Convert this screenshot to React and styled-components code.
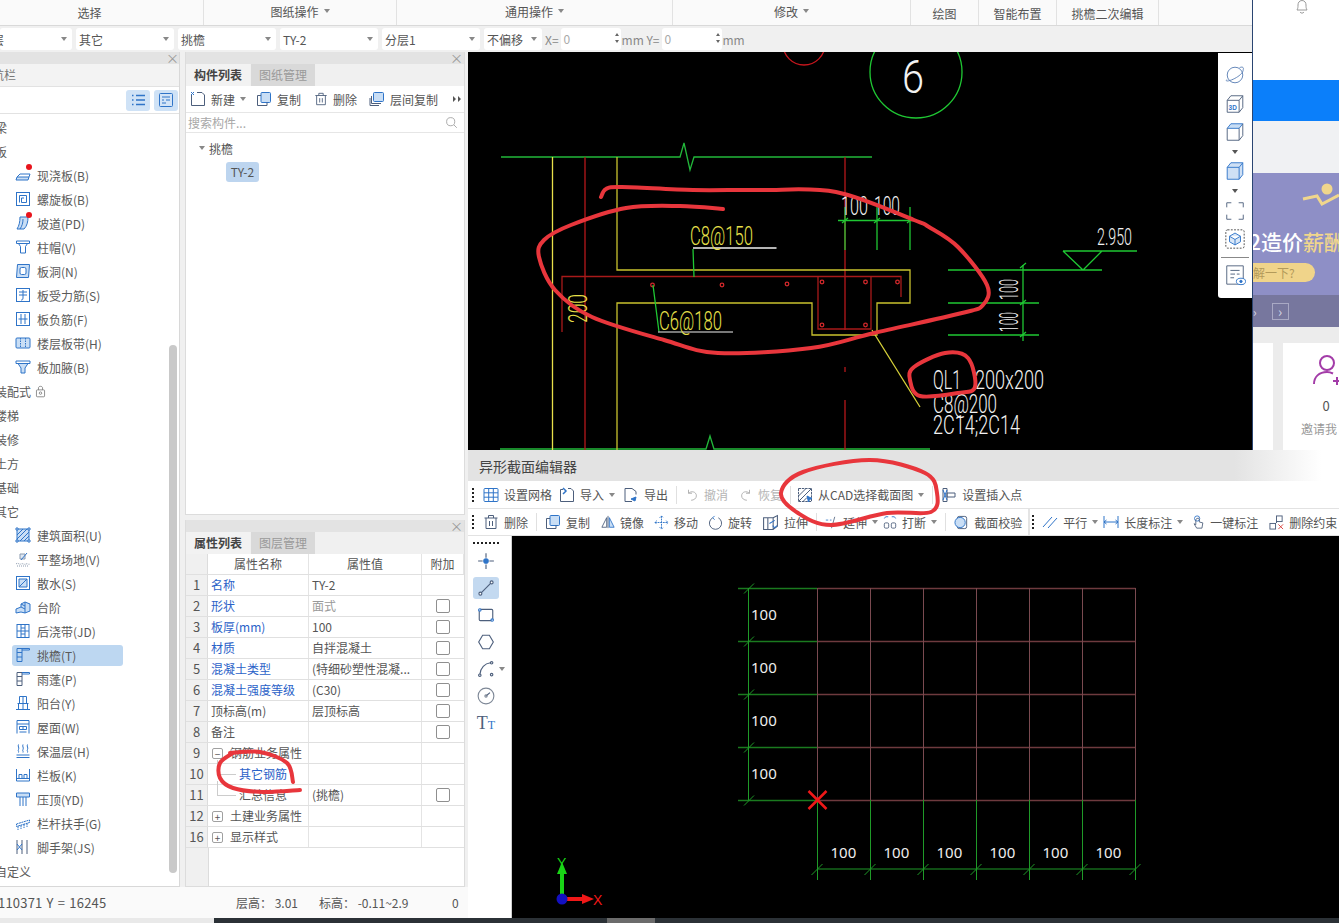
import React from 'react'
import styled, { createGlobalStyle } from 'styled-components'

const BLUE = '#2f74c8'
const LIGHT = '#c9def5'
const SLATE = '#4d5f7c'

const ICONS = {
	slab: <><path d="M1 13l1-3h12l-1 3z" fill={LIGHT} /><path d="M2 10l3-3h10l-1 3" /></>,
	spiral: <><rect x="1.5" y="1.5" width="13" height="13" /><path d="M4.5 11.5v-7h7v7h-5v-4.500h2.500" /></>,
	ramp: <><path d="M5 2h8c0 5-1 9-4 12H2c2-3 3-7 3-12z" fill={LIGHT} /><path d="M8 4c0 4-1 7-3 10" /></>,
	capital: <path d="M1.500 2h13v2.500h-13zM3.500 4.500l2 3v6.500h5V7.500l2-3" />,
	hole: <><path d="M2.500 1.500h12l-1 13h-12z" fill={LIGHT} /><rect x="5" y="4.500" width="6" height="7" rx="1.500" fill="#fff" /></>,
	force: <><rect x="1.500" y="1.500" width="13" height="13" /><path d="M4 5h8M4 8h8M8 3v8c0 2-1 2-2 2" /></>,
	neg: <><rect x="1.500" y="1.500" width="13" height="13" /><path d="M6 3v10M10 3v10M3.500 8h9" /></>,
	band: <><rect x="1" y="3" width="14" height="10" rx="1" fill={LIGHT} /><path d="M5.500 3v10M10.500 3v10" strokeDasharray="1.500 1" /></>,
	haunch: <><path d="M1 2h14v2.500H1z" /><path d="M3 4.500l3 4.500v5h4V9l3-4.500z" fill={LIGHT} /></>,
	area: <><rect x="2" y="2" width="12" height="12" fill={LIGHT} /><path d="M2 8l6-6M2 12l10-10M5 14l9-9M9 14l5-5" /><path d="M1 1h2v2H1zM13 1h2v2h-2zM1 13h2v2H1zM13 13h2v2h-2z" fill="#fff" /></>,
	site: <g stroke="#8b9aae"><path d="M5 3h5v5H5z" fill="#dfe8f3" /><path d="M12 2L6 9" stroke={BLUE} /><path d="M1 13c2-2 3 1 5 0s3 1 5 0 2 1 4 0M2 15h12" strokeDasharray="1 1" /></g>,
	apron: <><rect x="1.500" y="1.500" width="13" height="13" /><path d="M4 4h8v8H4zM4 12l8-8" fill={LIGHT} /></>,
	steps: <path d="M1 10l5-2V5l4-2 5 2v7l-5 2-4-1-5 1z M6 8l4 2M10 3v11M6 5l4 2" fill={LIGHT} />,
	pour: <><rect x="2" y="1.500" width="12" height="13" /><path d="M6 1.500v13M10 1.500v13M6 5h4M6 11h4M2 8h12" /></>,
	eave: <><path d="M2 1.500h5v13H2z" /><path d="M2 5.500h5M2 10h5M7 1.500h7.500v1.500H7" /></>,
	canopy: <g stroke={SLATE}><path d="M2 1.500h5v13H2z" /><path d="M2 5.500h5M2 10h5" /><path d="M7 1.500h7.500v1.500H7" stroke={BLUE} /></g>,
	balcony: <path d="M4.500 1.500h7v7h-7zM8 1.500v7M1 14.500h14M2.500 8.500h11M3.500 8.500v6M8 8.500v6M12.500 8.500v6" />,
	roof: <><path d="M2 1.500h12v3.500H2zM2 5v9.500M14 5v9.500" /><path d="M4.500 7.500h7v3h-7zM8 7.500v3M4.500 13h7" /></>,
	insulation: <path d="M3.500 1.500c-1 2 1 3 0 5s1 2 0 3M8 1.500c-1 2 1 3 0 5s1 2 0 3M12.500 1.500c-1 2 1 3 0 5s1 2 0 3M1.500 12h13M1.500 14.500h13" />,
	rail: <path d="M1.500 2v12h13V2M1.500 11.500h13M4 7.500h3v4H4zM9 7.500h3v4H9z" />,
	coping: <><path d="M1.500 2h13v4h-13z" fill={LIGHT} /><path d="M5 6v9M11 6v9M8 6v9" /></>,
	handrail: <path d="M1.500 9l13-4v2.500l-13 4zM3 11v4M6 10v4M9 9v4M12 8v4" strokeDasharray="2 .6" />,
	scaffold: <g stroke={SLATE}><path d="M2 1v14M7 1v14M12 1v14" /><path d="M2 5l5 6M7 5L2 11" stroke={BLUE} /></g>,
	lock: <g stroke="#777"><rect x="3" y="6" width="10" height="8.500" rx="1" /><path d="M5.500 6V3.500c0-2.500 5-2.500 5 0V6" /><circle cx="8" cy="10" r="1.500" /></g>,
	listDots: <path d="M6 3.500h9M6 8h9M6 12.500h9M2 3.500h1.500M2 8h1.500M2 12.500h1.500" strokeWidth="1.500" />,
	listBox: <><rect x="1.500" y="1.500" width="13" height="13" rx="1" fill="#d3e4f7" /><path d="M4 5h8M4 8h2M8 8h4M4 11h4" /></>,
	newDoc: <g stroke={SLATE}><path d="M1.500 3.500v11h13V4l-2.500-2.500H7" /><path d="M1 1l3 3M4 1L1 4" stroke={BLUE} /></g>,
	copy: <g stroke={SLATE}><rect x="5" y="1.500" width="9.500" height="10" rx="1" fill={LIGHT} stroke={BLUE} /><path d="M5 4.500H1.500v10H11v-3" /></g>,
	trash: <g stroke={SLATE}><path d="M3 4v10.500h10V4M1.500 4h13M5.500 4V1.500h5V4M6.500 7v5M9.500 7v5" /></g>,
	floorCopy: <g stroke={SLATE}><rect x="4.500" y="1.500" width="10" height="9" rx="1" fill={LIGHT} stroke={BLUE} /><path d="M2.500 5v7.500H12M1 7v7.500h9" /></g>,
	more: <path d="M4 5l3 3-3 3zM9 5l3 3-3 3z" fill="#555" stroke="none" />,
	search: <g stroke="#999"><circle cx="7" cy="7" r="5" /><path d="M11 11l3.500 3.500" /></g>,
	grid: <><rect x="1" y="1.500" width="14" height="13" rx="1" /><path d="M5.700 1.500v13M10.300 1.500v13M1 5.800h14M1 10.200h14" /></>,
	importIn: <g stroke={SLATE}><path d="M4 2.500H1.500v12h13V4l-2.500-2.500H9" /><path d="M4 1l3 3-3 3" stroke={BLUE} strokeWidth="1.500" /></g>,
	exportOut: <g stroke={SLATE}><path d="M9 14.500H2v-13h7l4 3v3" /><path d="M8 12l5-2-1 4z" fill={BLUE} stroke={BLUE} /></g>,
	undo: <path d="M4 2v4h4M4 6c3-3 9-2 9 3 0 3-3 5-6 5" stroke="#a9a9a9" />,
	redo: <path d="M12 2v4H8M12 6c-3-3-9-2-9 3 0 3 3 5 6 5" stroke="#a9a9a9" />,
	cadPick: <g stroke={SLATE}><rect x="1.500" y="1.500" width="13" height="13" strokeDasharray="2.500 .8" /><path d="M1.500 9l7.500-7.500M1.500 14.500l13-13M6 14.500l4-4" /><path d="M10 9l5 2.500-2.500 1-1 2.500z" fill={BLUE} stroke={BLUE} /></g>,
	insertPoint: <g stroke={SLATE}><path d="M2 1.500h4v13H2zM6 6h8v4H6z" /><path d="M2 3l4 10M6 3L2 13" stroke={BLUE} /></g>,
	mirror: <g stroke={SLATE}><path d="M8 1v14" /><path d="M6.500 3L1 14h5.500z" /><path d="M9.500 3L15 14H9.500z" fill={LIGHT} stroke={BLUE} /></g>,
	move: <path d="M8 1v14M1 8h14M6 3l2-2 2 2M6 13l2 2 2-2M3 6L1 8l2 2M13 6l2 2-2 2" strokeDasharray="2 .8" />,
	rotate: <g stroke={SLATE}><path d="M5 3a6.500 6.500 0 1 0 6 0" /><path d="M7 1L5 3l2 2" stroke={BLUE} /></g>,
	stretch: <g stroke={SLATE}><path d="M1.500 3.500h9v11h-9zM10.500 3.500l4-2v10l-4 3M5.500 3.500v11" /><path d="M7 9l5-3M10 11l2 2 2-2" stroke={BLUE} /></g>,
	extend: <g stroke={SLATE}><path d="M1 5h3M6 5h2" stroke={BLUE} /><path d="M12 1L8 15" /></g>,
	breakIt: <g stroke={SLATE}><path d="M3 2l-1.500 2M13 2l1.500 2M6 2H3M13 2h-3" stroke={BLUE} /><rect x="1.500" y="9" width="5" height="6" rx="1.500" /><rect x="9.500" y="9" width="5" height="6" rx="1.500" /></g>,
	check: <g stroke={SLATE}><rect x="3.500" y="1.500" width="10" height="13" rx="2" /><circle cx="6.500" cy="8" r="5.500" fill={LIGHT} stroke={BLUE} /></g>,
	parallel: <path d="M1 13L10 3M6 14l9-10" />,
	lengthDim: <><path d="M1 2v12M15 2v12" /><path d="M1 8h14M3.500 6L1 8l2.500 2M12.500 6L15 8l-2.500 2" /></>,
	touch: <g stroke={SLATE}><circle cx="7" cy="4" r="3" stroke={BLUE} /><path d="M5.500 5v6l-2-1 3 5h6l1-6-4-1V5c0-1.500-2-2-4 0z" /></g>,
	unconstrain: <g stroke={SLATE}><rect x="1" y="9" width="6" height="6" /><rect x="8" y="1" width="6" height="6" /><path d="M7 9l2-2" /><path d="M10 10l5 5M15 10l-5 5" stroke="#d9413d" /></g>,
	pointTool: <g stroke={SLATE}><path d="M8 1v4M8 11v4M1 8h4M11 8h4" /><circle cx="8" cy="8" r="2" fill={BLUE} stroke={BLUE} /></g>,
	lineTool: <g stroke={SLATE}><path d="M3.500 12.500l9-9" /><circle cx="3" cy="13" r="1.300" fill="#fff" /><circle cx="13" cy="3" r="1.300" fill="#fff" /></g>,
	rectTool: <g stroke={SLATE}><rect x="2" y="3" width="12" height="10" rx="1" /><circle cx="2.500" cy="3.500" r="1.100" fill="#fff" stroke={BLUE} /><circle cx="13.500" cy="12.500" r="1.100" fill="#fff" stroke={BLUE} /></g>,
	hexTool: <path d="M5 2h6l3.500 6-3.500 6H5L1.500 8z" stroke={SLATE} />,
	arcTool: <g stroke={SLATE}><path d="M2.500 13C3 7 7 3 12 2.500" /><circle cx="2.500" cy="13.500" r="1.100" fill="#fff" /><circle cx="13" cy="2.500" r="1.100" fill="#fff" /><circle cx="13" cy="13" r="1.100" fill="#fff" /></g>,
	circleTool: <g stroke="#7d8796"><circle cx="8" cy="8" r="7" /><path d="M8 8l3.500-3" stroke={SLATE} /><circle cx="8" cy="8" r="1" /></g>,
	sphere: <g stroke="#5a7fb5"><circle cx="12" cy="12" r="8.500" /><path d="M3 17c-4 5 18-3 18-11 1-3-2-3-4-2" /></g>,
	cube3d: <g stroke={SLATE}><path d="M3.500 8l4-5h13v13l-4 5h-13zM3.500 8h13v13M16.500 8l4-5" /><text x="5" y="18.500" fontSize="7" fontWeight="700" fill={BLUE} stroke="none" fontFamily="Liberation Sans, sans-serif">3D</text></g>,
	cubeTop: <g stroke={SLATE}><path d="M3.500 8h13l4-5h-13z" fill={LIGHT} stroke={BLUE} /><path d="M3.500 8v13h13V8M20.500 3v13l-4 5" /></g>,
	cubeFull: <><path d="M3.500 8l4-5h13v13l-4 5h-13z" fill="#cfe0f5" /><path d="M3.500 8h13v13M16.500 8l4-5" /></>,
	frameDash: <path d="M3 8V3h5M16 3h5v5M21 16v5h-5M8 21H3v-5" stroke={SLATE} />,
	cubeDash: <g><rect x="2" y="2" width="20" height="20" rx="2" stroke="#444" strokeDasharray="2 1.500" /><path d="M12 5.500l6 3.500v6l-6 3.500L6 15V9zM6 9l6 3.500L18 9M12 12.500v6" fill="#d9e7f7" /></g>,
	listEye: <g stroke={SLATE}><path d="M3 2h18v20H3zM7 7h10M7 11h5M14 11h3M7 15h4" /><ellipse cx="18.500" cy="19" rx="5" ry="3.500" fill="#fff" stroke={BLUE} /><circle cx="18.500" cy="19" r="1.300" fill={BLUE} stroke={BLUE} /></g>,
}

const NAV_ROWS = [
	{ label: '梁' },
	{ label: '板' },
	{ label: '现浇板(B)', icon: 'slab', dot: true },
	{ label: '螺旋板(B)', icon: 'spiral' },
	{ label: '坡道(PD)', icon: 'ramp', dot: true },
	{ label: '柱帽(V)', icon: 'capital' },
	{ label: '板洞(N)', icon: 'hole' },
	{ label: '板受力筋(S)', icon: 'force' },
	{ label: '板负筋(F)', icon: 'neg' },
	{ label: '楼层板带(H)', icon: 'band' },
	{ label: '板加腋(B)', icon: 'haunch' },
	{ label: '装配式', lock: true },
	{ label: '楼梯' },
	{ label: '装修' },
	{ label: '土方' },
	{ label: '基础' },
	{ label: '其它' },
	{ label: '建筑面积(U)', icon: 'area' },
	{ label: '平整场地(V)', icon: 'site' },
	{ label: '散水(S)', icon: 'apron' },
	{ label: '台阶', icon: 'steps' },
	{ label: '后浇带(JD)', icon: 'pour' },
	{ label: '挑檐(T)', icon: 'eave', selected: true },
	{ label: '雨蓬(P)', icon: 'canopy' },
	{ label: '阳台(Y)', icon: 'balcony' },
	{ label: '屋面(W)', icon: 'roof' },
	{ label: '保温层(H)', icon: 'insulation' },
	{ label: '栏板(K)', icon: 'rail' },
	{ label: '压顶(YD)', icon: 'coping' },
	{ label: '栏杆扶手(G)', icon: 'handrail' },
	{ label: '脚手架(JS)', icon: 'scaffold' },
	{ label: '自定义' },
]

const PROPERTIES = [
	{ no: 1, name: '名称', value: 'TY-2', link: true },
	{ no: 2, name: '形状', value: '面式', link: true, box: true, muted: true },
	{ no: 3, name: '板厚(mm)', value: '100', link: true, box: true },
	{ no: 4, name: '材质', value: '自拌混凝土', link: true, box: true },
	{ no: 5, name: '混凝土类型', value: '(特细砂塑性混凝...', link: true, box: true },
	{ no: 6, name: '混凝土强度等级', value: '(C30)', link: true, box: true },
	{ no: 7, name: '顶标高(m)', value: '层顶标高', box: true },
	{ no: 8, name: '备注', value: '', box: true },
	{ no: 9, name: '钢筋业务属性', value: '', toggle: '−' },
	{ no: 10, name: '其它钢筋', value: '', link: true, child: true },
	{ no: 11, name: '汇总信息', value: '(挑檐)', child: true, box: true },
	{ no: 12, name: '土建业务属性', value: '', toggle: '+' },
	{ no: 16, name: '显示样式', value: '', toggle: '+' },
]

function smooth(points, closed) {
	const at = (i) => closed ? points[(i + points.length) % points.length] : points[Math.max(0, Math.min(points.length - 1, i))]
	const last = closed ? points.length : points.length - 1
	let d = `M${points[0][0]} ${points[0][1]}`
	for (let i = 0; i < last; i++) {
		const [p0, p1, p2, p3] = [at(i - 1), at(i), at(i + 1), at(i + 2)]
		d += `C${p1[0] + (p2[0] - p0[0]) / 6} ${p1[1] + (p2[1] - p0[1]) / 6} ${p2[0] - (p3[0] - p1[0]) / 6} ${p2[1] - (p3[1] - p1[1]) / 6} ${p2[0]} ${p2[1]}`
	}
	return d
}

const SCRIBBLES = [
	smooth([[601, 197], [606, 189], [622, 187], [693, 190], [760, 190], [836, 192], [914, 220], [929, 227], [958, 247], [987, 285], [983, 305], [962, 313], [874, 333], [811, 348], [718, 353], [664, 340], [592, 317], [555, 290], [539, 257], [544, 240], [571, 225], [626, 208], [680, 206], [723, 209]]),
	smooth([[914, 367], [945, 353], [968, 358], [975, 387], [958, 393], [920, 396], [910, 380]], true),
	smooth([[781, 493], [803, 472], [870, 460], [925, 473], [937, 493], [931, 512], [887, 513], [831, 525], [798, 513]], true),
	smooth([[233, 753], [220, 763], [220, 778], [233, 788], [263, 792], [300, 790]]),
	smooth([[230, 753], [260, 752], [287, 763], [293, 782]]),
]

const Icon = ({ name, size = 16, box = 16, color = BLUE }) => (
	<IconSvg viewBox={`0 0 ${box} ${box}`} $size={size} $color={color}>{ICONS[name]}</IconSvg>
)

function Tool({ icon, label, muted, caret, gap, size }) {
	return (
		<ToolItem $muted={muted} $gap={gap}>
			<Icon name={icon} size={size} />
			<span>{label}</span>
			{caret && <Caret />}
		</ToolItem>
	)
}

function CadText({ x, y, w, size = 26, fill = '#f2f2f2', rotate, children }) {
	return (
		<ThinText
			x={x}
			y={y}
			fontSize={size}
			fill={fill}
			textLength={w}
			lengthAdjust="spacingAndGlyphs"
			transform={rotate ? `rotate(-90 ${x} ${y})` : undefined}
		>
			{children}
		</ThinText>
	)
}

function Ribbon() {
	return (
		<RibbonBar>
			<RibbonGroup $w={204} $pad={24}>选择</RibbonGroup>
			<RibbonGroup $w={193} $high>图纸操作<Caret $push /></RibbonGroup>
			<RibbonGroup $w={276} $high>通用操作<Caret $push /></RibbonGroup>
			<RibbonGroup $w={238} $high>修改<Caret $push /></RibbonGroup>
			<RibbonGroup $w={68} $low>绘图</RibbonGroup>
			<RibbonGroup $w={78} $low>智能布置</RibbonGroup>
			<RibbonGroup $w={102} $low>挑檐二次编辑</RibbonGroup>
		</RibbonBar>
	)
}

function OptionStrip() {
	return (
		<OptionBar>
			<SelectBox $w={72}><SelectText $clip>层</SelectText><Caret /></SelectBox>
			<SelectBox $w={98}><SelectText>其它</SelectText><Caret /></SelectBox>
			<SelectBox $w={98}><SelectText>挑檐</SelectText><Caret /></SelectBox>
			<SelectBox $w={98}><SelectText>TY-2</SelectText><Caret /></SelectBox>
			<SelectBox $w={98}><SelectText>分层1</SelectText><Caret /></SelectBox>
			<SelectBox $w={58}><SelectText>不偏移</SelectText><Caret /></SelectBox>
			<FieldLabel $lead>X=</FieldLabel>
			<SpinBox>0<Spinner><SpinUp /><SpinDown /></Spinner></SpinBox>
			<FieldLabel>mm Y=</FieldLabel>
			<SpinBox>0<Spinner><SpinUp /><SpinDown /></Spinner></SpinBox>
			<FieldLabel>mm</FieldLabel>
		</OptionBar>
	)
}

function NavPanel() {
	return (
		<NavColumn>
			<PanelCloser $flush>×</PanelCloser>
			<NavTitle>导航栏</NavTitle>
			<NavTools>
				<NavToolButton><Icon name="listDots" /></NavToolButton>
				<NavToolButton><Icon name="listBox" /></NavToolButton>
			</NavTools>
			<NavTree>
				{NAV_ROWS.map((row) => (
					<NavRow key={row.label} $selected={row.selected} $leaf={!!row.icon}>
						{row.icon && (
							<NavIcon>
								<Icon name={row.icon} />
								{row.dot && <RedDot />}
							</NavIcon>
						)}
						<span>{row.label}</span>
						{row.lock && <Icon name="lock" size={13} />}
					</NavRow>
				))}
			</NavTree>
			<ScrollThumb />
		</NavColumn>
	)
}

function ComponentPanel() {
	return (
		<SidePanel $h={463}>
			<PanelCloser>×</PanelCloser>
			<TabRow>
				<Tab $active>构件列表</Tab>
				<Tab>图纸管理</Tab>
			</TabRow>
			<ComponentTools>
				<Tool icon="newDoc" label="新建" caret />
				<Tool icon="copy" label="复制" />
				<Tool icon="trash" label="删除" gap={11} size={14} />
				<Tool icon="floorCopy" label="层间复制" gap={10} />
				<MoreButton><Icon name="more" /></MoreButton>
			</ComponentTools>
			<SearchRow>
				<span>搜索构件...</span>
				<Icon name="search" size={13} />
			</SearchRow>
			<ComponentTree>
				<TreeParent><Caret />挑檐</TreeParent>
				<TreePill>TY-2</TreePill>
			</ComponentTree>
		</SidePanel>
	)
}

function PropertyPanel() {
	return (
		<SidePanel $h={367}>
			<PanelCloser>×</PanelCloser>
			<TabRow>
				<Tab $active>属性列表</Tab>
				<Tab>图层管理</Tab>
			</TabRow>
			<PropHeader>
				<PropNo />
				<HeaderCell>属性名称</HeaderCell>
				<HeaderCell>属性值</HeaderCell>
				<HeaderCell>附加</HeaderCell>
			</PropHeader>
			{PROPERTIES.map((p) => (
				<PropRow key={p.no}>
					<PropNo>{p.no}</PropNo>
					<PropName $link={p.link} $child={p.child} $group={!!p.toggle}>
						{p.toggle && <Toggle>{p.toggle}</Toggle>}
						{p.child && <TreeElbow />}
						{p.name}
					</PropName>
					<PropValue $muted={p.muted}>{p.value}</PropValue>
					<PropExtra>{p.box && <CheckBox />}</PropExtra>
				</PropRow>
			))}
			<PropFiller />
		</SidePanel>
	)
}

function StatusLine() {
	return (
		<StatusBar>
			<Coords>110371 Y = 16245</Coords>
			<StatusItem $w={83}>层高：&nbsp;3.01</StatusItem>
			<StatusItem $w={133}>标高：&nbsp;-0.11~2.9</StatusItem>
			<StatusItem>0</StatusItem>
		</StatusBar>
	)
}

function CadDrawing() {
	return (
		<CadSvg viewBox="468 52 784 398">
			<g fill="none" strokeWidth="1.300">
				<circle cx="804" cy="44" r="21" stroke="#c8161d" />
				<circle cx="916" cy="72" r="46" stroke="#1fc733" />
				<path d="M501 157H680L684 143L690 170L694 157H872" stroke="#22b83a" />
				<path d="M500 449H706L710 436L714 449H930" stroke="#22b83a" />
				<path d="M552.500 157V450" stroke="#e8e04a" />
				<path d="M585 157V450M845 157V330M845 367V372M845 400V450" stroke="#b5171b" />
				<path d="M617 157V270H910V303H877V335H812V303H617V450" stroke="#c9c22e" />
				<path d="M562 332V276.500H901V297M818 276.500V329H871V276.500" stroke="#a81a1a" />
				<path d="M872 330L920 407" stroke="#d8d23a" />
				{[[652.5, 285], [722, 285], [787, 284], [822, 282], [865.5, 282], [897.5, 282], [822, 325], [865.500, 325]].map(([x, y]) => (
					<circle key={`${x}${y}`} cx={x} cy={y} r="1.800" stroke="#d0282b" />
				))}
				<path d="M693 249L694 277M653 285L659 332M838 220.500H914M845 207V250M877 207V250M910 207V250" stroke="#1fc733" />
				<path d="M842 223l6-5M874 223l6-5M907 223l6-5M1020 268l6-5M1020 305l6-5M1020 337l6-5" stroke="#1fc733" />
				<path d="M693 248H776.500" stroke="#f0f0f0" />
				<path d="M658 332H733" stroke="#a0a0a0" />
				<path d="M1063 251H1137M1063 251L1083 270L1102 251M948 270H1102M948 303H1039M948 335H1039M1023 265V341" stroke="#1fc733" />
			</g>
			<CadText x="902" y="93" w="22" size="46">6</CadText>
			<CadText x="690" y="245" w="63" fill="#e8e04a">C8@150</CadText>
			<CadText x="659" y="330" w="63" fill="#e8e04a">C6@180</CadText>
			<CadText x="587" y="323" w="29" fill="#e8e04a" rotate>200</CadText>
			<CadText x="841" y="215" w="27">100</CadText>
			<CadText x="874" y="215" w="26">100</CadText>
			<CadText x="1097" y="245" w="35" size="23">2.950</CadText>
			<CadText x="1018" y="300" w="21" rotate>100</CadText>
			<CadText x="1018" y="332" w="20" rotate>100</CadText>
			<CadText x="933" y="389" w="28">QL1</CadText>
			<CadText x="975" y="389" w="69">200x200</CadText>
			<CadText x="933" y="413" w="64">C8@200</CadText>
			<CadText x="933" y="434" w="87">2C14;2C14</CadText>
		</CadSvg>
	)
}

function FloatingTools() {
	return (
		<FloatBar>
			<Icon name="sphere" box={24} size={22} />
			<Icon name="cube3d" box={24} size={22} />
			<Icon name="cubeTop" box={24} size={22} />
			<Caret $dark />
			<Icon name="cubeFull" box={24} size={22} />
			<Caret $dark />
			<Icon name="frameDash" box={24} size={22} />
			<Icon name="cubeDash" box={24} size={22} />
			<FloatRule />
			<Icon name="listEye" box={24} size={22} />
		</FloatBar>
	)
}

function Browser() {
	return (
		<BrowserPane>
			<BellSlot>
				<svg width="16" height="14" viewBox="0 0 16 14" fill="none" stroke="#9a9a9a">
					<path d="M3 10c1-2 1-3 1-5S5 .5 8 .5s4 2.500 4 4.500 0 3 1 5zM6 12c1 1.500 3 1.500 4 0" />
				</svg>
			</BellSlot>
			<BlueBand />
			<GreyBand />
			<Banner>
				<svg width="86" height="30" viewBox="0 0 86 30" fill="none">
					<path d="M50 18l14-3 5 8 17-9" stroke="#f0d68c" strokeWidth="3" />
					<circle cx="74" cy="8" r="5.500" fill="#f0d68c" />
				</svg>
				<BannerTitle>2造价<Gold>薪酬</Gold></BannerTitle>
				<BannerPill><span>了解一下?</span></BannerPill>
			</Banner>
			<BannerFooter>
				<span>›</span>
				<PagerBox>›</PagerBox>
			</BannerFooter>
			<CardRow>
				<Card $w={20} />
				<Card>
					<svg width="27" height="32" viewBox="0 0 27 32" fill="none" stroke="#a33ca8" strokeWidth="2">
						<circle cx="14" cy="9" r="7" />
						<path d="M1 30c0-7 5-12 13-12 2 0 4 .5 6 1.500M20 27h9M24 23v8" />
					</svg>
					<CardNumber>0</CardNumber>
					<CardCaption>邀请我</CardCaption>
				</Card>
			</CardRow>
		</BrowserPane>
	)
}

function SectionGrid() {
	const xs = [817.5, 870.5, 923.5, 976.5, 1029.5, 1082.5, 1135.5]
	const ys = [588.5, 641.5, 694.5, 747.5, 800.5]
	return (
		<SectionSvg viewBox="512 536 827 382">
			<g fill="none" strokeWidth="1">
				{ys.map((y) => <path key={y} d={`M738 ${y}H817`} stroke="#1a7a1f" strokeWidth="1.500" />)}
				{ys.map((y) => <path key={y} d={`M817.500 ${y}H1135.500`} stroke="#6e3a3e" strokeWidth="1.500" />)}
				{xs.map((x) => <path key={x} d={`M${x} 588V800`} stroke="#7a4a50" />)}
				{xs.map((x) => <path key={x} d={`M${x} 800V880`} stroke="#1f9a28" />)}
				<path d="M748.500 588V800M817 869H1135" stroke="#1f9a28" />
				{ys.map((y) => <path key={y} d={`M744 ${y + 5}l10-10`} stroke="#1f9a28" />)}
				{xs.map((x) => <path key={x} d={`M${x - 6} 875l11-11`} stroke="#1f9a28" />)}
			</g>
			{ys.slice(0, 4).map((y) => <GridLabel key={y} x="751" y={y + 31}>100</GridLabel>)}
			{xs.slice(0, 6).map((x) => <GridLabel key={x} x={x + 13} y="858">100</GridLabel>)}
			<path d="M808.500 791l18 18M826.500 791l-18 18" stroke="#f01818" strokeWidth="2.500" />
			<path d="M562 899V872" stroke="#19d416" strokeWidth="4" />
			<path d="M557 874l5-12 5 12z" fill="#19d416" />
			<path d="M562 899H586" stroke="#f01818" strokeWidth="4" />
			<path d="M582 894l12 5-12 5z" fill="#f01818" />
			<circle cx="562" cy="899" r="5.500" fill="#1310c0" />
			<AxisLabel x="557" y="868" fill="#19d416">Y</AxisLabel>
			<AxisLabel x="593" y="905" fill="#f01818">X</AxisLabel>
		</SectionSvg>
	)
}

function SectionEditor() {
	return (
		<EditorWindow>
			<EditorTitle>异形截面编辑器</EditorTitle>
			<EditorToolbar $h={28}>
				<Grip />
				<Tool icon="grid" label="设置网格" />
				<Tool icon="importIn" label="导入" caret gap={7} />
				<Tool icon="exportOut" label="导出" />
				<ToolSep />
				<Tool icon="undo" label="撤消" muted size={14} />
				<Tool icon="redo" label="恢复" muted gap={11} size={14} />
				<ToolSep $tight />
				<Tool icon="cadPick" label="从CAD选择截面图" caret />
				<ToolSep />
				<Tool icon="insertPoint" label="设置插入点" />
			</EditorToolbar>
			<EditorToolbar $h={27}>
				<Grip />
				<Tool icon="trash" label="删除" />
				<ToolSep />
				<Tool icon="copy" label="复制" />
				<Tool icon="mirror" label="镜像" gap={11} size={14} />
				<Tool icon="move" label="移动" gap={10} size={15} />
				<Tool icon="rotate" label="旋转" gap={10} size={15} />
				<Tool icon="stretch" label="拉伸" gap={10} size={17} />
				<ToolSep />
				<Tool icon="extend" label="延伸" caret size={13} />
				<Tool icon="breakIt" label="打断" caret gap={5} size={14} />
				<ToolSep />
				<Tool icon="check" label="截面校验" size={15} />
				<ToolBreak />
				<Grip $tight />
				<Tool icon="parallel" label="平行" caret />
				<Tool icon="lengthDim" label="长度标注" caret gap={5} />
				<Tool icon="touch" label="一键标注" size={14} />
				<Tool icon="unconstrain" label="删除约束" gap={11} size={15} />
			</EditorToolbar>
			<EditorBody>
				<ToolColumn>
					<DotRow />
					<ColumnTool><Icon name="pointTool" size={18} /></ColumnTool>
					<ColumnTool $active><Icon name="lineTool" size={18} /></ColumnTool>
					<ColumnTool><Icon name="rectTool" size={18} /></ColumnTool>
					<ColumnTool><Icon name="hexTool" size={18} /></ColumnTool>
					<ColumnTool><Icon name="arcTool" size={18} /><SideCaret /></ColumnTool>
					<ColumnTool><Icon name="circleTool" size={18} /></ColumnTool>
					<ColumnTool><TextGlyph>T<small>T</small></TextGlyph></ColumnTool>
				</ToolColumn>
				<SectionGrid />
			</EditorBody>
		</EditorWindow>
	)
}

function App() {
	return (
		<Page>
			<GlobalStyle />
			<TopRow>
				<AppWindow>
					<Ribbon />
					<OptionStrip />
					<MainRow>
						<SideArea>
							<SideColumns>
								<NavPanel />
								<MiddleColumn>
									<ComponentPanel />
									<PropertyPanel />
								</MiddleColumn>
							</SideColumns>
							<StatusLine />
						</SideArea>
						<CadViewport>
							<CadDrawing />
							<FloatingTools />
						</CadViewport>
					</MainRow>
				</AppWindow>
				<Browser />
			</TopRow>
			<TaskStrip />
			<SectionEditor />
			<Annotations viewBox="0 0 1339 923">
				{SCRIBBLES.map((d) => <path key={d} d={d} />)}
			</Annotations>
		</Page>
	)
}

export default App

const GlobalStyle = createGlobalStyle`
	html, body {
		margin: 0;
		padding: 0;
		background: #fff;
	}
	body {
		font-family: "Noto Sans CJK SC", "Liberation Sans", sans-serif;
		font-size: 12px;
		color: #555;
	}
`

const IconSvg = styled.svg`
	width: ${(p) => p.$size}px;
	height: ${(p) => p.$size}px;
	flex: none;
	fill: none;
	stroke: ${(p) => p.$color};
	stroke-width: 1;
`

const Caret = styled.i`
	display: inline-block;
	flex: none;
	width: 0;
	height: 0;
	margin-left: ${(p) => (p.$push ? '5px' : '0')};
	border-left: 3.5px solid transparent;
	border-right: 3.5px solid transparent;
	border-top: 4px solid ${(p) => (p.$dark ? '#555' : '#888')};
`

const Page = styled.div`
	position: relative;
	width: 1339px;
	height: 923px;
	overflow: hidden;
	display: flex;
	flex-direction: column;
`

const TopRow = styled.div`
	display: flex;
	height: 918px;
`

const TaskStrip = styled.div`
	height: 5px;
	background: linear-gradient(to right, #e9e9e9 0 214px, #2b3136 214px 607px, #6b6b6b 607px 655px, #2b3136 655px);
`

const AppWindow = styled.div`
	width: 1252px;
	display: flex;
	flex-direction: column;
	border-right: 1px solid #2a4572;
	flex: none;
`

const RibbonBar = styled.div`
	display: flex;
	height: 25px;
	background: #fafafa;
	border-bottom: 1px solid #d9d9d9;
`

const RibbonGroup = styled.div`
	width: ${(p) => p.$w}px;
	padding-right: ${(p) => p.$pad || 0}px;
	padding-bottom: ${(p) => (p.$high ? '3px' : '0')};
	padding-top: ${(p) => (p.$low ? '2px' : '0')};
	box-sizing: border-box;
	border-right: 1px solid #e2e2e2;
	display: flex;
	align-items: center;
	justify-content: center;
	color: #555;
`

const OptionBar = styled.div`
	display: flex;
	align-items: center;
	gap: 4px;
	height: 26px;
	background: #f0f0f0;
`

const SelectBox = styled.div`
	width: ${(p) => p.$w}px;
	height: 22px;
	flex: none;
	box-sizing: border-box;
	padding: 0 5px 0 3px;
	background: #fff;
	border-radius: 3px;
	display: flex;
	align-items: center;
	justify-content: space-between;
	overflow: hidden;
`

const SelectText = styled.span`
	margin-left: ${(p) => (p.$clip ? '-11px' : '0')};
	white-space: nowrap;
`

const FieldLabel = styled.span`
	color: #888;
	white-space: nowrap;
	margin: 0 -2px 0 ${(p) => (p.$lead ? '-1px' : '-3px')};
`

const SpinBox = styled.div`
	position: relative;
	width: 60px;
	height: 22px;
	flex: none;
	box-sizing: border-box;
	padding-left: 3px;
	line-height: 21px;
	background: #fff;
	border-radius: 3px;
	color: #aaa;
`

const Spinner = styled.div`
	position: absolute;
	right: 2px;
	top: 5px;
	display: flex;
	flex-direction: column;
	gap: 4px;
`

const SpinUp = styled.i`
	width: 0;
	height: 0;
	border: 2.5px solid transparent;
	border-top: 0;
	border-bottom: 3px solid #666;
`

const SpinDown = styled.i`
	width: 0;
	height: 0;
	border: 2.5px solid transparent;
	border-bottom: 0;
	border-top: 3px solid #666;
`

const MainRow = styled.div`
	display: flex;
	flex: 1;
	min-height: 0;
`

const SideArea = styled.div`
	width: 468px;
	flex: none;
	display: flex;
	flex-direction: column;
	background: #f0f0f0;
`

const SideColumns = styled.div`
	display: flex;
	gap: 5px;
	padding-right: 3px;
	height: 835px;
`

const NavColumn = styled.div`
	position: relative;
	width: 180px;
	flex: none;
	display: flex;
	flex-direction: column;
	background: #fff;
	border-right: 1px solid #d8d8d8;
	box-sizing: border-box;
	border-bottom: 1px solid #d8d8d8;
	overflow: hidden;
`

const PanelCloser = styled.div`
	height: 12px;
	flex: none;
	background: #e3e3e3;
	color: #999;
	font-size: 13px;
	line-height: 12px;
	text-align: right;
	padding-right: ${(p) => (p.$flush ? '0' : '1px')};
`

const NavTitle = styled.div`
	height: 22px;
	flex: none;
	margin-left: -20px;
	background: #f3f3f3;
	line-height: 22px;
	border-bottom: 1px solid #e2e2e2;
	color: #777;
`

const NavTools = styled.div`
	height: 26px;
	flex: none;
	display: flex;
	align-items: center;
	justify-content: flex-end;
	gap: 4px;
	padding-right: 1px;
	border-bottom: 1px solid #e2e2e2;
`

const NavToolButton = styled.div`
	width: 24px;
	height: 21px;
	display: flex;
	align-items: center;
	justify-content: center;
	background: #cfe2f6;
	border-radius: 3px;
`

const NavTree = styled.div`
	display: flex;
	flex-direction: column;
	padding-top: 1px;
`

const NavRow = styled.div`
	position: relative;
	height: ${(p) => (p.$selected ? '21px' : '24px')};
	margin: ${(p) => (p.$selected ? '1.5px 0 1.5px 12px' : '0')};
	width: ${(p) => (p.$selected ? '111px' : 'auto')};
	box-sizing: border-box;
	display: flex;
	align-items: center;
	gap: ${(p) => (p.$leaf ? '6px' : '3px')};
	padding-left: ${(p) => (p.$selected ? '3px' : p.$leaf ? '15px' : '0')};
	margin-left: ${(p) => (p.$selected ? '12px' : p.$leaf ? '0' : '-5px')};
	background: ${(p) => (p.$selected ? '#bdd7f1' : 'transparent')};
	border-radius: 3px;
	white-space: nowrap;
	color: #5a5a5a;
`

const NavIcon = styled.span`
	position: relative;
	display: flex;
`

const RedDot = styled.i`
	position: absolute;
	right: -1px;
	top: -3px;
	width: 6px;
	height: 6px;
	border-radius: 50%;
	background: #e8141c;
`

const ScrollThumb = styled.div`
	position: absolute;
	left: 169px;
	top: 293px;
	width: 8px;
	height: 528px;
	border-radius: 4px;
	background: #c9c9c9;
`

const MiddleColumn = styled.div`
	width: 280px;
	flex: none;
	display: flex;
	flex-direction: column;
	gap: 5px;
`

const SidePanel = styled.div`
	height: ${(p) => p.$h}px;
	display: flex;
	flex-direction: column;
	box-sizing: border-box;
	background: #fff;
	border: 1px solid #dcdcdc;
	border-top: 0;
`

const TabRow = styled.div`
	display: flex;
	height: 22px;
	flex: none;
	background: #f0f0f0;
	gap: 1px;
`

const Tab = styled.div`
	width: 64px;
	text-align: center;
	line-height: 22px;
	font-weight: ${(p) => (p.$active ? 700 : 400)};
	color: ${(p) => (p.$active ? '#444' : '#999')};
	background: ${(p) => (p.$active ? '#f2f2f2' : '#d9d9d9')};
`

const ComponentTools = styled.div`
	display: flex;
	align-items: center;
	gap: 10px;
	height: 27px;
	flex: none;
	padding-left: 4px;
	border-bottom: 1px solid #e6e6e6;
	box-sizing: border-box;
`

const ToolItem = styled.div`
	display: flex;
	align-items: center;
	gap: 5px;
	flex: none;
	white-space: nowrap;
	margin-left: ${(p) => (p.$gap ? p.$gap - 8 : 0)}px;
	color: ${(p) => (p.$muted ? '#b5b5b5' : '#555')};
`

const MoreButton = styled.span`
	display: flex;
	margin-left: 1px;
`

const SearchRow = styled.div`
	height: 19px;
	flex: none;
	display: flex;
	align-items: center;
	justify-content: space-between;
	padding: 0 6px 0 2px;
	color: #a8a8a8;
	border-bottom: 1px solid #e6e6e6;
`

const ComponentTree = styled.div`
	display: flex;
	flex-direction: column;
	align-items: flex-start;
	padding: 3px 0 0 13px;
`

const TreeParent = styled.div`
	display: flex;
	align-items: center;
	gap: 4px;
	height: 24px;
`

const TreePill = styled.div`
	margin: 2px 0 0 27px;
	width: 33px;
	height: 20px;
	line-height: 20px;
	text-align: center;
	border-radius: 3px;
	background: #bdd5ef;
`

const PropHeader = styled.div`
	display: grid;
	grid-template-columns: 22px 101px 113px 1fr;
	height: 21px;
	flex: none;
	border-bottom: 1px solid #e0e0e0;
	box-sizing: border-box;
`

const PropRow = styled(PropHeader)`
	line-height: 20px;
`

const HeaderCell = styled.div`
	text-align: center;
	line-height: 20px;
	border-right: 1px solid #e4e4e4;
`

const PropNo = styled.div`
	background: #f0f0f0;
	border-right: 1px solid #dcdcdc;
	font-size: 13px;
	text-align: center;
`

const PropName = styled.div`
	position: relative;
	display: flex;
	align-items: center;
	gap: 7px;
	padding-left: ${(p) => (p.$child ? '31px' : p.$group ? '4px' : '3px')};
	color: ${(p) => (p.$link ? '#2b62c8' : '#555')};
	border-right: 1px solid #e4e4e4;
	white-space: nowrap;
`

const Toggle = styled.span`
	width: 11px;
	height: 11px;
	box-sizing: border-box;
	border: 1px solid #a0a0a0;
	border-radius: 2px;
	font-size: 10px;
	line-height: 9px;
	text-align: center;
	color: #555;
`

const TreeElbow = styled.i`
	position: absolute;
	left: 9px;
	top: -4px;
	width: 18px;
	height: 14px;
	border-left: 1px solid #ccc;
	border-bottom: 1px solid #ccc;
`

const PropValue = styled.div`
	padding-left: 3px;
	color: ${(p) => (p.$muted ? '#999' : '#555')};
	border-right: 1px solid #e4e4e4;
	white-space: nowrap;
	overflow: hidden;
`

const PropExtra = styled.div`
	display: flex;
	align-items: center;
	justify-content: center;
`

const CheckBox = styled.i`
	width: 14px;
	height: 14px;
	box-sizing: border-box;
	border: 1px solid #8f8f8f;
	border-radius: 2px;
	background: #fff;
`

const PropFiller = styled.div`
	flex: 1;
	width: 22px;
	background: #f0f0f0;
	border-right: 1px solid #dcdcdc;
`

const StatusBar = styled.div`
	flex: 1;
	display: flex;
	align-items: center;
	background: #fafafa;
	padding-right: 9px;
`

const Coords = styled.span`
	margin-left: -2px;
	width: 238px;
	font-size: 13px;
	letter-spacing: 0.2px;
	word-spacing: 1px;
	white-space: nowrap;
`

const StatusItem = styled.span`
	width: ${(p) => (p.$w ? `${p.$w}px` : 'auto')};
	white-space: nowrap;
`

const CadViewport = styled.div`
	position: relative;
	flex: 1;
	background: #000;
	overflow: hidden;
`

const CadSvg = styled.svg`
	display: block;
	width: 784px;
	height: 398px;
`

const ThinText = styled.text`
	font-family: Roboto, "Liberation Sans", sans-serif;
	font-weight: 300;
`

const FloatBar = styled.div`
	position: absolute;
	top: 1px;
	right: 0;
	width: 34px;
	height: 245px;
	box-sizing: border-box;
	padding-top: 11px;
	background: #fff;
	border-radius: 0 0 0 3px;
	display: flex;
	flex-direction: column;
	align-items: center;
	gap: 6.6px;
`

const FloatRule = styled.div`
	width: 28px;
	border-top: 1px solid #888;
`

const BrowserPane = styled.div`
	flex: 1;
	min-width: 0;
	display: flex;
	flex-direction: column;
	overflow: hidden;
	background: #fff;
`

const BellSlot = styled.div`
	height: 80px;
	padding-left: 41px;
	flex: none;
`

const BlueBand = styled.div`
	height: 41px;
	flex: none;
	background: #0b7ffa;
`

const GreyBand = styled.div`
	height: 52px;
	flex: none;
	background: #f0f1f3;
`

const Banner = styled.div`
	position: relative;
	height: 122px;
	flex: none;
	display: flex;
	flex-direction: column;
	padding-top: 8px;
	box-sizing: border-box;
	background: #8e8fc6;
	overflow: hidden;
`

const BannerTitle = styled.div`
	margin: 15px 0 0 -4px;
	font-size: 21px;
	line-height: 30px;
	font-weight: 500;
	color: #fff;
	white-space: nowrap;
`

const Gold = styled.span`
	color: #f0d68c;
`

const BannerPill = styled.div`
	width: 62px;
	height: 19px;
	margin-top: 7px;
	overflow: hidden;
	border-radius: 0 10px 10px 0;
	background: #f0d48a;
	color: #b39a5a;
	font-size: 12px;
	line-height: 19px;
	white-space: nowrap;
	text-indent: -12px;
`

const BannerFooter = styled.div`
	height: 32px;
	flex: none;
	display: flex;
	align-items: center;
	gap: 15px;
	background: #77779e;
	color: #d9d9e8;
`

const PagerBox = styled.div`
	width: 17px;
	height: 17px;
	box-sizing: border-box;
	border: 1px solid #a9a9c4;
	text-align: center;
	line-height: 14px;
	font-size: 14px;
`

const CardRow = styled.div`
	flex: 1;
	display: flex;
	gap: 10px;
	padding-top: 16px;
	background: #ececec;
`

const Card = styled.div`
	width: ${(p) => (p.$w ? `${p.$w}px` : '86px')};
	flex: none;
	display: flex;
	flex-direction: column;
	align-items: center;
	padding-top: 11px;
	box-sizing: border-box;
	background: #fff;
`

const CardNumber = styled.div`
	margin-top: 10px;
	font-size: 13px;
	color: #555;
`

const CardCaption = styled.div`
	margin-top: 5px;
	color: #999;
	white-space: nowrap;
	align-self: flex-start;
	padding-left: 18px;
`

const EditorWindow = styled.div`
	position: absolute;
	left: 468px;
	top: 450px;
	width: 871px;
	height: 468px;
	display: flex;
	flex-direction: column;
	background: #fff;
`

const EditorTitle = styled.div`
	height: 31px;
	flex: none;
	box-sizing: border-box;
	padding-left: 11px;
	font-size: 14px;
	line-height: 33px;
	color: #444;
	background: linear-gradient(to right, #e3e3e3 0 88%, #fff 98%);
`

const EditorToolbar = styled.div`
	height: ${(p) => p.$h}px;
	flex: none;
	box-sizing: border-box;
	display: flex;
	align-items: center;
	gap: 8px;
	overflow: hidden;
	padding-left: 4px;
	border-bottom: 1px solid #e2e2e2;
`

const Grip = styled.i`
	width: 2px;
	height: 14px;
	flex: none;
	margin-right: ${(p) => (p.$tight ? '0' : '1px')};
	background: repeating-linear-gradient(to bottom, #222 0 2px, transparent 2px 4px);
`

const ToolSep = styled.i`
	width: 1px;
	height: 18px;
	flex: none;
	margin-right: ${(p) => (p.$tight ? '-2px' : '0')};
	background: #e0e0e0;
`

const ToolBreak = styled.i`
	width: 2px;
	height: 27px;
	margin: 0 -6px 0 -2px;
	flex: none;
	background: #e4e4e4;
`

const EditorBody = styled.div`
	flex: 1;
	display: flex;
	min-height: 0;
`

const ToolColumn = styled.div`
	width: 44px;
	flex: none;
	display: flex;
	flex-direction: column;
	align-items: flex-start;
	padding: 6px 0 0 5px;
	box-sizing: border-box;
	background: #fff;
	border-right: 1px solid #cfcfcf;
`

const DotRow = styled.i`
	width: 26px;
	height: 2px;
	margin-bottom: 6px;
	background: repeating-linear-gradient(to right, #222 0 2px, transparent 2px 4px);
`

const ColumnTool = styled.div`
	position: relative;
	width: 26px;
	height: 22px;
	margin-bottom: 5px;
	display: flex;
	align-items: center;
	justify-content: center;
	border-radius: 3px;
	background: ${(p) => (p.$active ? '#c3d9f0' : 'transparent')};
`

const SideCaret = styled(Caret)`
	position: absolute;
	right: -6px;
	top: 9px;
`

const TextGlyph = styled.span`
	font-family: "Liberation Serif", serif;
	font-size: 18px;
	color: ${SLATE};
	line-height: 1;
	small {
		font-size: 12px;
		color: ${BLUE};
	}
`

const SectionSvg = styled.svg`
	display: block;
	flex: 1;
	width: 827px;
	height: 382px;
	background: #000;
`

const GridLabel = styled.text`
	font-family: "Noto Sans", sans-serif;
	font-size: 15px;
	fill: #eee;
`

const AxisLabel = styled.text`
	font-family: "Liberation Sans", sans-serif;
	font-size: 14px;
`

const Annotations = styled.svg`
	position: absolute;
	left: 0;
	top: 0;
	width: 1339px;
	height: 923px;
	pointer-events: none;
	fill: none;
	stroke: #e8363c;
	stroke-width: 4;
	stroke-linecap: round;
	stroke-linejoin: round;
`
